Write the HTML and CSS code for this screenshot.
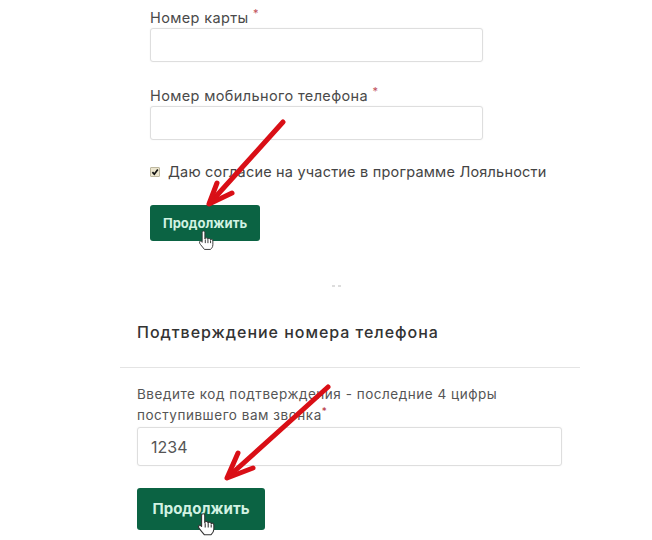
FILE: index.html
```html
<!DOCTYPE html>
<html lang="ru">
<head>
<meta charset="utf-8">
<title>Подтверждение номера телефона</title>
<link rel="stylesheet" href="styles.css">
</head>
<body>
<main class="page">
  <form class="card-form">
    <div class="field">
      <label class="label">Номер карты <sup class="req">*</sup></label>
      <input class="input" type="text">
    </div>
    <div class="field field-second">
      <label class="label">Номер мобильного телефона <sup class="req">*</sup></label>
      <input class="input" type="text">
    </div>
    <label class="consent">
      <span class="box"><svg viewBox="0 0 10 10" width="10" height="10"><path d="M2.4 5.2 4.3 7.2 7.8 2.6" fill="none" stroke="#111" stroke-width="1.7"/></svg></span>
      Даю согласие на участие в программе Лояльности
    </label>
    <button class="btn" type="button">Продолжить</button>
  </form>
  <section class="confirm">
    <h2 class="title">Подтверждение номера телефона</h2>
    <div class="confirm-body">
      <label class="label-code">Введите код подтверждения - последние 4 цифры поступившего вам звонка<sup class="req-code">*</sup></label>
      <input class="input input-code" type="text" value="1234">
      <button class="btn btn-large" type="button">Продолжить</button>
    </div>
  </section>
  <svg class="overlay" viewBox="0 0 652 540" width="652" height="540" aria-hidden="true">
    <path class="specks" d="M332 286h3M338 286h3"/>
    <g class="arrow">
      <path d="M283 122 210 203"/>
      <path d="M217 183 209 204 232 193"/>
      <path d="M328 387 228 477"/>
      <path d="M238 453 227 478 253 468"/>
    </g>
    <g class="hand" transform="translate(199 230) scale(1.050)">
      <path d="M3 2.500c0-2 2.600-2 2.600 0v6c.4-1.400 2.600-1.400 2.800.3.500-1.200 2.500-1 2.600.6.600-.9 2.200-.6 2.200 1v3.600c0 2.500-1.400 3.700-2.300 4.500H5.200C4 17 2.800 15.500 1.400 13.800c-.9-1.100-1.200-2.300-.7-2.900.6-.7 1.600-.2 2.300.8Z"/>
      <path d="M6 9v3.500M8.500 9v3.500M11 10v2.500"/>
    </g>
    <g class="hand" transform="translate(198 512.500) scale(1.200)">
      <path d="M3 2.500c0-2 2.600-2 2.600 0v6c.4-1.400 2.600-1.400 2.800.3.500-1.200 2.500-1 2.600.6.600-.9 2.200-.6 2.200 1v3.600c0 2.500-1.400 3.700-2.300 4.500H5.200C4 17 2.800 15.500 1.400 13.800c-.9-1.100-1.200-2.300-.7-2.900.6-.7 1.600-.2 2.300.8Z"/>
      <path d="M6 9v3.500M8.500 9v3.500M11 10v2.500"/>
    </g>
  </svg>
</main>
</body>
</html>
```

FILE: styles.css
```css
* { box-sizing: border-box; }
html, body { margin: 0; padding: 0; background: #fff; }
body { font-family: "Inter", "Liberation Sans", sans-serif; color: #444; }
.page { position: relative; width: 652px; height: 540px; overflow: hidden; }
.card-form { display: flex; flex-direction: column; align-items: flex-start; padding: 8px 0 0 150px; }
.field { display: flex; flex-direction: column; width: 333px; }
.field-second { margin-top: 24px; }
.label { font-size: 14.500px; line-height: 20px; letter-spacing: .37px; color: #4a4a4a; }
.req { color: #c0505a; font-size: 11px; line-height: 0; }
.input { display: block; width: 100%; height: 34px; border: 1px solid #dedede; border-radius: 3px; background: #fff; box-shadow: 0 0 2px rgba(0,0,0,.06); padding: 0 12px; font: inherit; color: #555; outline: none; }
.consent { display: flex; align-items: center; gap: 8px; margin-top: 22px; font-size: 14.500px; line-height: 20px; letter-spacing: .2px; color: #444; }
.box { display: flex; width: 10px; height: 10px; background: #ece6cf; border: 1px solid #bdb79f; border-radius: 1px; flex: none; align-items: center; justify-content: center; }
.box svg { flex: none; }
.btn { display: block; width: 110px; height: 36px; margin-top: 23px; padding: 0; border: 0; border-radius: 3px; background: #0b6343; color: #d2f2e2; font: 700 13px/36px "Inter", "Liberation Sans", sans-serif; }
.confirm { width: 460px; margin: 81px 0 0 120px; }
.title { margin: 0; padding: 0 17px; font-size: 16px; line-height: 20px; font-weight: 500; letter-spacing: .97px; color: #333; }
.confirm-body { display: flex; flex-direction: column; align-items: flex-start; margin-top: 25px; padding: 16px 17px 0; border-top: 1px solid #e4e4e4; }
.label-code { width: 425px; font-size: 13.500px; line-height: 21px; letter-spacing: .53px; color: #555; }
.req-code { color: #b5303a; font-size: 10px; line-height: 0; }
.input-code { width: 425px; height: 39px; margin-top: 1px; padding: 0 13px; font-size: 16px; color: #555; }
.btn-large { width: 128px; height: 42px; margin-top: 22px; font-size: 15px; line-height: 42px; }
.overlay { position: absolute; left: 0; top: 0; pointer-events: none; }
.arrow path { fill: none; stroke: #d90f16; stroke-width: 5; stroke-linecap: round; stroke-linejoin: round; }
.hand path { fill: #fff; stroke: #333; stroke-width: .9; stroke-linejoin: round; }
.specks { stroke: #bbb; stroke-width: 1; fill: none; }
```
